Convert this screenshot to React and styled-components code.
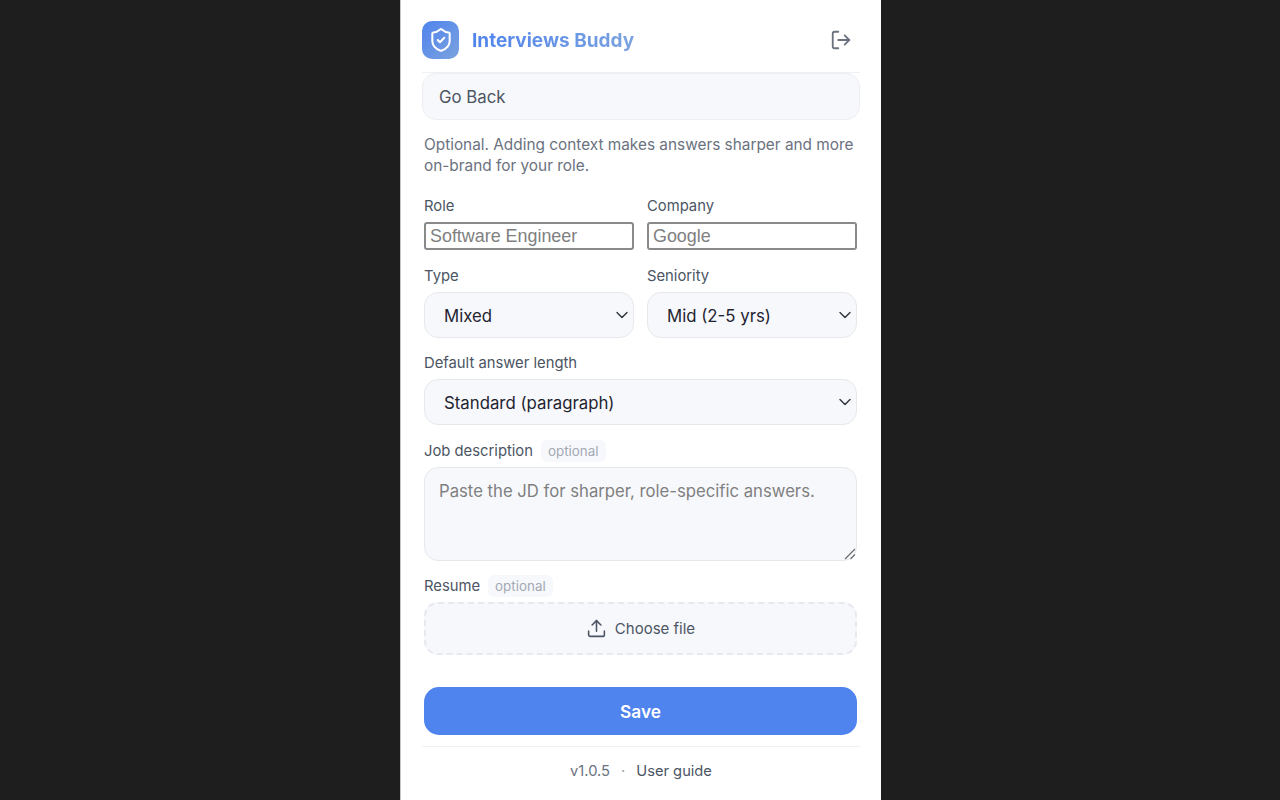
import React from "react";
import styled, { createGlobalStyle } from "styled-components";
import { LogOut, ShieldCheck, ChevronDown, Upload } from "lucide-react";

const GlobalStyle = createGlobalStyle`
    * { box-sizing: border-box; }
    html, body { margin: 0; height: 100%; background: #1e1e1e; }
    body { font-family: Inter, "Liberation Sans", sans-serif; overflow: hidden; }
`;

const Page = styled.div`
    height: 800px;
    padding-left: 400px;
    background: #1e1e1e;
`;

const Panel = styled.div`
    width: 481px;
    height: 800px;
    background: #fff;
    border-left: 1px solid #c4c4c4;
    padding: 0 21px;
    display: flex;
    flex-direction: column;
`;

const Header = styled.header`
    height: 73px;
    flex: none;
    display: flex;
    align-items: center;
    justify-content: space-between;
    border-bottom: 1px solid #eff0f3;
    padding-top: 8px;
`;

const Brand = styled.div`
    display: flex;
    align-items: center;
    gap: 13px;
`;

const Logo = styled.div`
    width: 37px;
    height: 38px;
    border-radius: 10px;
    background: linear-gradient(135deg, #4f83ee, #7ba3de);
    color: #fff;
    display: flex;
    align-items: center;
    justify-content: center;
`;

const BrandName = styled.span`
    font-size: 19px;
    font-weight: 700;
    background: linear-gradient(90deg, #4f83ee, #7ba3de);
    -webkit-background-clip: text;
    background-clip: text;
    color: transparent;
`;

const IconButton = styled.button`
    width: 38px;
    height: 38px;
    padding: 0;
    border: 0;
    background: none;
    color: #6b7280;
    display: flex;
    align-items: center;
    justify-content: center;
`;

const BackButton = styled.button`
    height: 47px;
    flex: none;
    padding: 0 16px;
    text-align: left;
    font: 400 16.8px Inter, sans-serif;
    color: #4b5563;
    background: #f7f8fc;
    border: 1px solid #eceef2;
    border-radius: 14px;
`;

const Form = styled.div`
    padding: 0 3px 0 2px;
    display: flex;
    flex-direction: column;
`;

const Hint = styled.p`
    margin: 14px 0 0;
    font-size: 15.36px;
    line-height: 21px;
    color: #6b7280;
`;

const Row = styled.div`
    display: grid;
    grid-template-columns: 210px 210px;
    column-gap: 13px;
    margin-top: ${(props) => props.$top}px;
`;

const Field = styled.div`
    display: flex;
    flex-direction: column;
    margin-top: ${(props) => props.$top || 0}px;
`;

const Label = styled.label`
    display: flex;
    align-items: center;
    gap: 8px;
    height: ${(props) => props.$height || 20}px;
    margin-bottom: ${(props) => props.$gap}px;
    font-size: 14.8px;
    font-weight: 400;
    color: #4b5563;
`;

const Tag = styled.span`
    padding: 0 7px;
    height: 22px;
    line-height: 22px;
    font-size: 13.4px;
    font-weight: 400;
    color: #a3a9b4;
    background: #f7f8fc;
    border-radius: 6px;
`;

const TextInput = styled.input`
    width: 100%;
    height: 28px;
    padding: 0 4px;
    font: 400 17.9px "Liberation Sans", Arial, sans-serif;
    border: 2px solid #8a8a8a;
    border-radius: 3px;
    background: #fff;
    &::placeholder { color: #808080; opacity: 1; }
`;

const SelectWrap = styled.div`
    position: relative;
    height: 46px;
`;

const Select = styled.select`
    appearance: none;
    width: 100%;
    height: 100%;
    padding: 1px 19px 0;
    font: 400 16.8px Inter, sans-serif;
    color: #1f2430;
    background: #f7f8fc;
    border: 1px solid #e6e8ec;
    border-radius: 14px;
`;

const Chevron = styled(ChevronDown)`
    position: absolute;
    right: 2px;
    top: 13px;
    color: #2b303a;
    pointer-events: none;
`;

const AreaWrap = styled.div`
    position: relative;
    height: 94px;
`;

const TextArea = styled.textarea`
    display: block;
    width: 100%;
    height: 100%;
    padding: 12px 14px;
    resize: none;
    font: 400 16.7px/22px Inter, sans-serif;
    background: #f7f8fc;
    border: 1px solid #e6e8ec;
    border-radius: 14px;
    &::placeholder { color: #808080; opacity: 1; }
`;

const Grip = styled.svg`
    position: absolute;
    right: 1px;
    bottom: 1px;
`;

const FileDrop = styled.div`
    height: 53px;
    display: flex;
    align-items: center;
    justify-content: center;
    gap: 8px;
    font-size: 15px;
    font-weight: 400;
    color: #4b5563;
    background: #f7f8fc;
    border: 2px dashed #e8e9ee;
    border-radius: 14px;
`;

const SaveButton = styled.button`
    height: 48px;
    margin-top: 32px;
    border: 0;
    border-radius: 15px;
    background: #4f83ee;
    color: #fff;
    font: 600 17.3px Inter, sans-serif;
`;

const Footer = styled.footer`
    margin-top: 11px;
    height: 54px;
    flex: none;
    padding-bottom: 5px;
    border-top: 1px solid #eff0f3;
    display: flex;
    align-items: center;
    justify-content: center;
    font-size: 14.7px;
    color: #6b7280;
`;

const Dot = styled.span`
    margin: 0 11px;
    color: #9ca3af;
`;

const GuideLink = styled.a`
    color: #4b5563;
`;

const App = () => (
    <Page>
        <GlobalStyle />
        <Panel>
            <Header>
                <Brand>
                    <Logo>
                        <ShieldCheck size={26} strokeWidth={1.9} />
                    </Logo>
                    <BrandName>Interviews Buddy</BrandName>
                </Brand>
                <IconButton aria-label="Sign out">
                    <LogOut size={22} strokeWidth={2} />
                </IconButton>
            </Header>
            <BackButton>Go Back</BackButton>
            <Form>
                <Hint>Optional. Adding context makes answers sharper and more on-brand for your role.</Hint>
                <Row $top={20}>
                    <Field>
                        <Label $gap={6}>Role</Label>
                        <TextInput placeholder="Software Engineer" />
                    </Field>
                    <Field>
                        <Label $gap={6}>Company</Label>
                        <TextInput placeholder="Google" />
                    </Field>
                </Row>
                <Row $top={16}>
                    <Field>
                        <Label $gap={6}>Type</Label>
                        <SelectWrap>
                            <Select defaultValue="Mixed">
                                <option>Mixed</option>
                            </Select>
                            <Chevron size={20} strokeWidth={1.6} />
                        </SelectWrap>
                    </Field>
                    <Field>
                        <Label $gap={6}>Seniority</Label>
                        <SelectWrap>
                            <Select defaultValue="Mid (2-5 yrs)">
                                <option>Mid (2-5 yrs)</option>
                            </Select>
                            <Chevron size={20} strokeWidth={1.6} />
                        </SelectWrap>
                    </Field>
                </Row>
                <Field $top={15}>
                    <Label $gap={6}>Default answer length</Label>
                    <SelectWrap>
                        <Select defaultValue="Standard (paragraph)">
                            <option>Standard (paragraph)</option>
                        </Select>
                        <Chevron size={20} strokeWidth={1.6} />
                    </SelectWrap>
                </Field>
                <Field $top={15}>
                    <Label $height={22} $gap={5}>Job description <Tag>optional</Tag></Label>
                    <AreaWrap>
                        <TextArea placeholder="Paste the JD for sharper, role-specific answers." />
                        <Grip width="12" height="12" viewBox="0 0 12 12" fill="none" stroke="#6b6b6b" strokeWidth="1.2">
                            <path d="M1 11 11 1M6.5 11 11 6.5" />
                        </Grip>
                    </AreaWrap>
                </Field>
                <Field $top={14}>
                    <Label $height={22} $gap={5}>Resume <Tag>optional</Tag></Label>
                    <FileDrop>
                        <Upload size={21} strokeWidth={1.8} />
                        Choose file
                    </FileDrop>
                </Field>
                <SaveButton>Save</SaveButton>
            </Form>
            <Footer>
                v1.0.5
                <Dot>·</Dot>
                <GuideLink>User guide</GuideLink>
            </Footer>
        </Panel>
    </Page>
);

export default App;
